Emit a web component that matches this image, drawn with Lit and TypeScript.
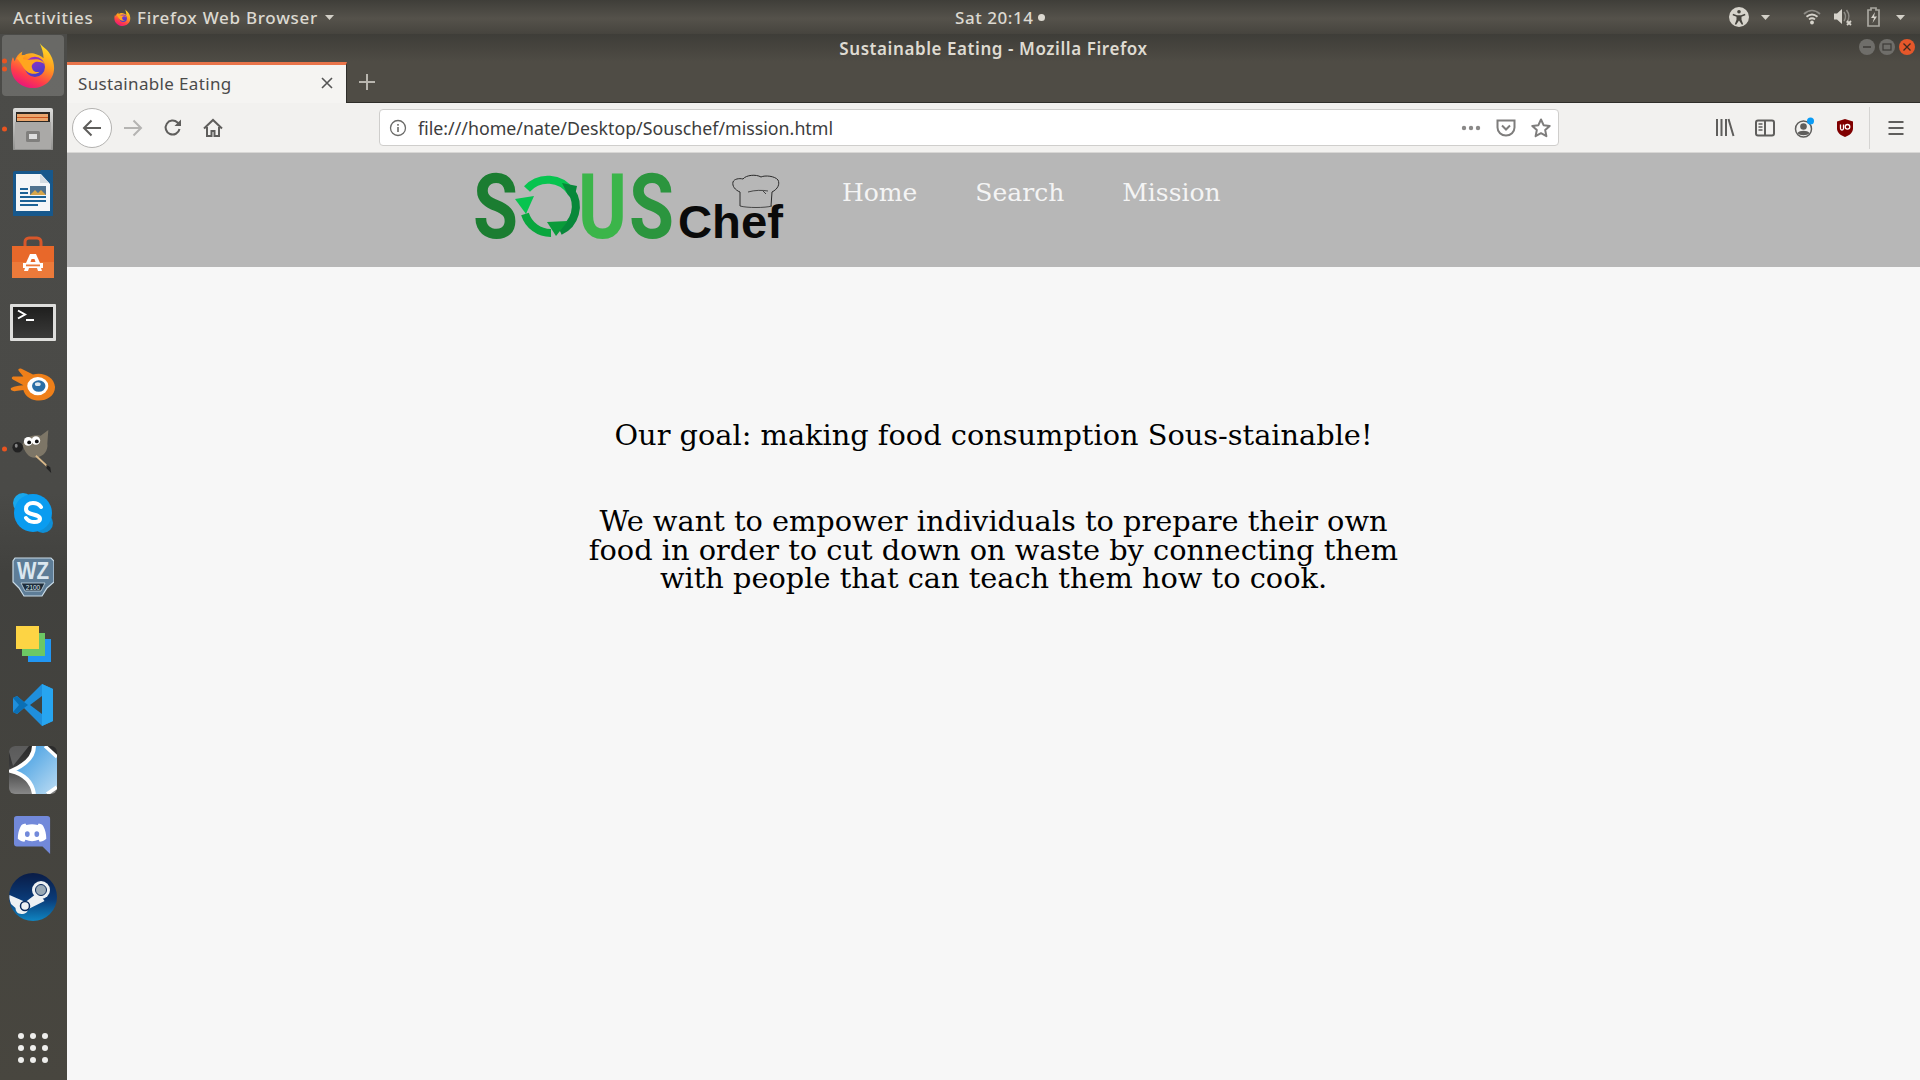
import { LitElement, html, css, svg } from "lit";
import { customElement } from "lit/decorators.js";

const ico = (w: number, body: unknown, vb = 24) =>
  html`<svg width=${w} height=${w} viewBox="0 0 ${vb} ${vb}">${body}</svg>`;

const firefox = (w: number, id = "a") => ico(w, svg`
  <defs>
    <linearGradient id="ffa${id}" x1="0.75" y1="0" x2="0.3" y2="1"><stop offset="0" stop-color="#ffe226"/><stop offset=".42" stop-color="#ff9a1f"/><stop offset=".75" stop-color="#ff3d4a"/><stop offset="1" stop-color="#e8127f"/></linearGradient>
    <linearGradient id="ffb${id}" x1="0.3" y1="0" x2="0.7" y2="1"><stop offset="0" stop-color="#a02fc4"/><stop offset="1" stop-color="#3f3fc8"/></linearGradient>
  </defs>
  <path fill="url(#ffa${id})" d="M31 1c2 4 8 6 11 12 3 5 4 10 4 14 0 12-10 21-22 21S1 39 1 26c0-4 1-8 2-10 1 1 1 3 2 4 1-4 4-8 8-10-1 2-1 4 0 5 3-3 8-4 12-3 4 1 8 3 10 5 0-6-2-11-4-16z"/>
  <circle cx="26" cy="26" r="10.500" fill="url(#ffb${id})"/>
  <path fill="#ffa51e" d="M7 17c3-3 6-4 9-3-2 1-3 3-2 4 4 1 9 0 13 0 4 0 8 2 9 5-3-2-7-3-10-2-2 1-4 3-3 6 1 4 5 5 8 4-3 3-9 3-13 0-4-3-6-9-11-14z"/>
`, 48);

const files = (w: number) => ico(w, svg`
  <defs><linearGradient id="fg" x1="0" y1="0" x2="0" y2="1"><stop offset="0" stop-color="#dcdcda"/><stop offset="1" stop-color="#8f8f8d"/></linearGradient></defs>
  <rect x="1" y="0" width="40" height="43" rx="2" fill="url(#fg)"/>
  <rect x="4" y="4" width="34" height="10" fill="#2b2723"/>
  <rect x="5" y="6" width="31" height="7" fill="#e9a56c"/><rect x="5" y="9" width="31" height="1" fill="#c9541e"/>
  <path d="M3 14h36v27H3z" fill="#aaa9a7"/>
  <rect x="14" y="23" width="14" height="11" rx="1.500" fill="#807f7d"/><rect x="17" y="26" width="8" height="5" fill="#dedede"/>
`, 42);

const writer = (w: number) => ico(w, svg`<g transform="translate(2 0)">
  <path d="M1 3a2 2 0 0 1 2-2h27l11 12v32a2 2 0 0 1-2 2H3a2 2 0 0 1-2-2z" fill="#17588c"/>
  <path d="M4 4h25l9 10v27H4z" fill="#f3f6f8"/><path d="M28 0h13v13z" fill="#17588c"/><path d="M28 4l9 9h-9z" fill="#d5dde3"/>
  <g fill="#1b6296"><rect x="8" y="18" width="8" height="2"/><rect x="8" y="22" width="8" height="2"/><rect x="8" y="26" width="26" height="2"/><rect x="8" y="30" width="26" height="2"/><rect x="8" y="34" width="18" height="2"/></g>
  <rect x="18" y="16" width="16" height="9" fill="#50738f"/><path d="M18 25l5-5 3 3 3-3 5 5z" fill="#d6a64a"/></g>
`, 46);

const software = (w: number) => ico(w, svg`
  <path d="M13 11V6a4 4 0 0 1 4-4h8a4 4 0 0 1 4 4v5" fill="none" stroke="#d8572a" stroke-width="3"/>
  <path d="M0 10h42v32H0z" fill="#ec7a3a"/><path d="M0 10h42v16H0z" fill="#e8682a"/>
  <path d="M18 18h6l4 9H14z" fill="#fff"/><path d="M19.500 23h3l1 3h-5z" fill="#e8682a"/>
  <rect x="11" y="27" width="20" height="5" fill="#fff"/><rect x="14" y="28.500" width="14" height="1.800" fill="#ec7a3a"/>
  <path d="M13 32h4l-1 3h-4zM25 32h4l1 3h-4z" fill="#fff"/>
`, 42);

const terminal = (w: number) => ico(w, svg`
  <defs><linearGradient id="tg" x1="0" y1="0" x2="0" y2="1"><stop offset="0" stop-color="#1f1f1e"/><stop offset="1" stop-color="#3a3a39"/></linearGradient></defs>
  <g transform="translate(0 6)">
  <rect x="0" y="0" width="46" height="37" rx="1" fill="#dededc"/><rect x="3" y="3" width="40" height="31" fill="url(#tg)"/>
  <path d="M8 6.500l7 4-7 4" fill="none" stroke="#fff" stroke-width="2"/><rect x="16" y="15" width="8" height="2" fill="#fff"/></g>
`, 46);

const blender = (w: number) => ico(w, svg`
  <path d="M1 24c4-2 9-3 13-3L3 15c-2-1-1-3 1-3h10L9 6c-1-2 1-3 3-2l12 6c10-3 22 2 23 13 0 10-10 15-19 14-8-1-13-6-14-11L6 27c-3 1-6-1-5-3z" fill="#ee7f19"/>
  <ellipse cx="29" cy="22" rx="11" ry="9.500" fill="#fff"/><ellipse cx="30" cy="22" rx="7" ry="6" fill="#2a6ea6"/><ellipse cx="29" cy="20" rx="3" ry="2" fill="#dfe8ef"/>
`, 48);

const gimp = (w: number) => ico(w, svg`
  <path d="M13 17c3-7 10-11 19-9l8-6-1 14c1 8-4 14-12 15-7 1-12-6-14-14z" fill="#7d7667"/>
  <ellipse cx="8" cy="20" rx="5.500" ry="5.500" fill="#222"/><ellipse cx="6.500" cy="18.500" rx="1.500" ry="2" fill="#888"/>
  <circle cx="19" cy="14" r="4.500" fill="#fff"/><circle cx="27" cy="13" r="4.500" fill="#fff"/><circle cx="20" cy="15" r="2" fill="#111"/><circle cx="28" cy="14" r="2" fill="#111"/>
  <path d="M27 29l12 11" stroke="#d9b98a" stroke-width="2"/><path d="M38 38l4 3 1 6-5-5z" fill="#222"/>
`, 48);

const skype = (w: number) => ico(w, svg`
  <circle cx="11" cy="11" r="10" fill="#1aa7ec"/><circle cx="31" cy="31" r="10" fill="#0f8ed6"/><circle cx="21" cy="21" r="19" fill="#0a9cf0"/>
  <path d="M29 15c-2-3-5-4-8-4-4 0-7 2-7 6 0 7 14 4 14 10 0 2-3 3-6 3s-6-1-8-4" fill="none" stroke="#fff" stroke-width="4" stroke-linecap="round"/>
`, 42);

const wz = (w: number) => html`<span class="wz">${ico(w, svg`
  <path d="M3 1h36l3 3v21l-7 6-5 8H12l-5-8-6-6V4z" fill="#5e7d97" stroke="#c8dae6" stroke-width="1.200"/>
  <text x="21" y="22" text-anchor="middle" font-family="Liberation Sans" font-weight="700" font-size="24" fill="#dbe7ef" textLength="32" lengthAdjust="spacingAndGlyphs">WZ</text>
  <path d="M9 26h24l-4 8H13z" fill="#1e2d3b" stroke="#c8dae6" stroke-width=".8"/>
  <text x="21" y="32.500" text-anchor="middle" font-family="Liberation Sans" font-size="6.500" fill="#dbe7ef">2100</text>
`, 42)}</span>`;

const slides = (w: number) => ico(w, svg`
  <rect x="14" y="14" width="23" height="23" fill="#2196f3"/><rect x="8" y="8" width="23" height="23" fill="#6cc864"/><rect x="2" y="1" width="23" height="23" fill="#fdd444"/>
`, 38);

const vscode = (w: number) => ico(w, svg`
  <path d="M30 0l11 5v32l-11 5L12 24l-7 6-4-2V14l4-2 7 6z" fill="#1f8fdc"/>
  <path d="M30 0l11 5v32l-11 5z" fill="#27a5f0"/><path d="M30 12L18 21l12 9z" fill="#3f4340"/>
  <path d="M5 12l7 6 4 3-4 3-7 6-4-2 6-7-6-7z" fill="#0b6fb5"/>
`, 42);

const krita = (w: number) => ico(w, svg`
  <defs><linearGradient id="kb" x1="0" y1="0" x2="1" y2="1"><stop offset="0" stop-color="#2f94df"/><stop offset="1" stop-color="#bcdcf3"/></linearGradient>
  <linearGradient id="kd" x1="0" y1="0" x2="0" y2="1"><stop offset="0" stop-color="#2a2a2a"/><stop offset=".4" stop-color="#3a3a3a"/><stop offset="1" stop-color="#888"/></linearGradient></defs>
  <rect x="0" y="0" width="48" height="48" rx="6" fill="url(#kd)"/>
  <path d="M0 6a6 6 0 0 1 6-6h14L4 20z" fill="#8c8c8c" opacity=".5"/>
  <path d="M25 0C25 12 14 20 2 25c12 3 21 10 23 23h12l11-8V11L36 0z" fill="url(#kb)"/>
  <path d="M25 0C25 12 14 20 2 25c12 3 21 10 23 23" fill="none" stroke="#fff" stroke-width="4"/>
  <path d="M36 0l12 11M38 48l10-7" stroke="#fff" stroke-width="3.500"/>
`, 48);

const discord = (w: number) => ico(w, svg`
  <path d="M3 0h32a3 3 0 0 1 3 3v37l-8-8H3a3 3 0 0 1-3-3V3a3 3 0 0 1 3-3z" fill="#7289da"/>
  <path d="M12 8c-3 1-4 1-5 3-2 4-3 8-3 13 2 2 5 3 7 3l1-2c5 2 9 2 14 0l1 2c2 0 5-1 7-3 0-5-1-9-3-13-1-2-2-2-5-3l-1 1.500c-4-1-8-1-12 0z" fill="#fff"/>
  <ellipse cx="14" cy="19" rx="2.500" ry="3" fill="#7289da"/><ellipse cx="24" cy="19" rx="2.500" ry="3" fill="#7289da"/>
`, 40);

const steam = (w: number) => ico(w, svg`
  <defs><linearGradient id="sg" x1="0" y1="0" x2="0" y2="1"><stop offset="0" stop-color="#0a1c46"/><stop offset=".55" stop-color="#0a3b78"/><stop offset="1" stop-color="#0f85c2"/></linearGradient></defs>
  <circle cx="24" cy="24" r="24" fill="url(#sg)"/>
  <path d="M0.500 22l16 7 13-10 6 9-16 8c-1 3-3 5-7 5-4 0-6-3-6-6L2 31c-1-3-2-6-1.500-9z" fill="#eef1f3"/>
  <circle cx="32" cy="17" r="9" fill="#eef1f3"/><circle cx="32" cy="17" r="5.500" fill="#9aa9b5" stroke="#0a2a5c" stroke-width="1"/>
  <circle cx="16" cy="33" r="4.500" fill="none" stroke="#0a2a5c" stroke-width="1.500"/>
`, 48);

const apps = html`<span class="apps">${Array.from({ length: 9 }, () => html`<i></i>`)}</span>`;

const dockItems: { i: unknown; dots?: number; active?: boolean; dy?: number }[] = [
  { i: firefox(46), dots: 2, active: true },
  { i: files(42), dots: 1 },
  { i: writer(46) },
  { i: software(42) },
  { i: terminal(46) },
  { i: blender(46), dy: 3 },
  { i: gimp(46), dots: 1, dy: 2 },
  { i: skype(42) },
  { i: wz(42), dy: 1 },
  { i: slides(38), dy: 3 },
  { i: vscode(42) },
  { i: krita(48), dy: 1 },
  { i: discord(38), dy: 2 },
  { i: steam(48) },
];

const grey = "#5f5e5c";
const backIco = ico(20, svg`<path d="M19 10H2M9.500 2.500L2 10l7.500 7.500" fill="none" stroke="${grey}" stroke-width="2"/>`, 20);
const fwdIco = ico(20, svg`<path d="M1 10h17M10.500 2.500L18 10l-7.500 7.500" fill="none" stroke="#b5b4b2" stroke-width="2"/>`, 20);
const reloadIco = ico(20, svg`<path d="M16.500 11a7 7 0 1 1-2-6.500L17 7" fill="none" stroke="${grey}" stroke-width="2"/><path d="M18 1.500V8h-6.500z" fill="${grey}"/>`, 20);
const homeIco = ico(20, svg`<path d="M1 10.500L10 2l9 8.500M4 9v9h4.500v-5h3v5H16V9" fill="none" stroke="${grey}" stroke-width="2"/>`, 20);
const infoIco = ico(18, svg`<circle cx="9" cy="9" r="7.500" fill="none" stroke="#6a6a68" stroke-width="1.300"/><rect x="8.200" y="8" width="1.600" height="5" fill="#6a6a68"/><rect x="8.200" y="5" width="1.600" height="1.700" fill="#6a6a68"/>`, 18);
const dotsIco = html`<svg width="20" height="6" viewBox="0 0 20 6"><g fill="#8a8988"><circle cx="3" cy="3" r="2.200"/><circle cx="10" cy="3" r="2.200"/><circle cx="17" cy="3" r="2.200"/></g></svg>`;
const pocketIco = ico(20, svg`<path d="M1.500 2.500h17v7a8.500 8 0 0 1-17 0z" fill="none" stroke="#7e7d7c" stroke-width="2"/><path d="M6 7.500l4 4 4-4" fill="none" stroke="#7e7d7c" stroke-width="2"/>`, 20);
const starIco = ico(20, svg`<path d="M10 1.500l2.600 5.700 6.100.7-4.500 4.200 1.200 6.100L10 15.200l-5.400 3 1.200-6.100L1.300 7.900l6.100-.7z" fill="none" stroke="#7e7d7c" stroke-width="2" stroke-linejoin="round"/>`, 20);
const libIco = ico(20, svg`<path d="M2 1v17M6.500 1v17M11 1v17M13.500 1l5 17" fill="none" stroke="${grey}" stroke-width="2"/>`, 20);
const sideIco = ico(20, svg`<rect x="1" y="2.500" width="18" height="15" rx="2" fill="none" stroke="${grey}" stroke-width="2"/><path d="M10 3v14" stroke="${grey}" stroke-width="2"/><path d="M3.500 6h4M3.500 9h4M3.500 12h4" stroke="${grey}" stroke-width="1.300"/>`, 20);
const acctIco = html`<svg width="24" height="24" viewBox="0 0 24 24"><circle cx="10.500" cy="13" r="8" fill="none" stroke="${grey}" stroke-width="1.500"/><circle cx="10.500" cy="10.500" r="3.300" fill="${grey}"/><path d="M4.500 17c2-3 10-3 12 0-2 3-10 3-12 0z" fill="${grey}"/><circle cx="17.500" cy="5" r="3.500" fill="#0a9bf5"/></svg>`;
const ublockIco = ico(20, svg`<path d="M10 1l8 2.500v7c0 4-3.500 7-8 8.500-4.500-1.500-8-4.500-8-8.500v-7z" fill="#800000"/><path d="M5.500 6.500v4c0 2 3 2 3 0v-4" fill="none" stroke="#fff" stroke-width="1.300"/><circle cx="12.500" cy="8.800" r="2.300" fill="none" stroke="#fff" stroke-width="1.300"/>`, 20);
const menuIco = ico(20, svg`<path d="M2.500 4h15M2.500 10h15M2.500 16h15" stroke="${grey}" stroke-width="2"/>`, 20);
const closeIco = ico(14, svg`<path d="M2 2l10 10M12 2L2 12" stroke="#555" stroke-width="1.600"/>`, 14);
const plusIco = ico(18, svg`<path d="M9 1v16M1 9h16" stroke="#b9b6af" stroke-width="2"/>`, 18);

const caret = html`<svg class="caret" width="9" height="5" viewBox="0 0 9 5"><path d="M0 0h9L4.500 5z" fill="#d3d0c8"/></svg>`;
const a11yIco = ico(20, svg`<circle cx="10" cy="10" r="10" fill="#d6d3cb"/><circle cx="10" cy="4.800" r="1.800" fill="#45433d"/><path d="M4 6.800l4 1.400h4l4-1.400.4 1.400-3.900 1.500v3l1.700 4.500-1.300.5L10 13.500 7.100 17.700l-1.300-.5 1.700-4.500v-3L3.600 8.200z" fill="#45433d"/>`, 20);
const wifiIco = ico(18, svg`<g fill="none" stroke-width="1.800"><path d="M1 6c5-4.500 11-4.500 16 0" stroke="#8d8b85"/><path d="M3.500 8.800c3.500-3 7.500-3 11 0" stroke="#d6d3cb"/><path d="M6 11.400c2-1.600 4-1.600 6 0" stroke="#d6d3cb"/></g><circle cx="9" cy="14.500" r="1.900" fill="#d6d3cb"/>`, 18);
const volIco = ico(20, svg`<path d="M1 6.500h3L9 2v15L4 12.500H1z" fill="#d6d3cb"/><path d="M11 5c2 3 2 6 0 9M13.500 3c3 4 3 9 0 13" fill="none" stroke="#8d8b85" stroke-width="1.500"/><path d="M14 14l4 4M18 14l-4 4" stroke="#d6d3cb" stroke-width="1.800"/>`, 20);
const battIco = ico(20, svg`<path d="M7 1h5v2h3v16H4V3h3z" fill="none" stroke="#a8a69f" stroke-width="1.700"/><path d="M11 5l-4 6h3l-1.500 5L13 9.500h-3z" fill="#d6d3cb"/>`, 20);
const smallFf = firefox(17, "b");

const hat = svg`
  <g fill="none" stroke="#2a2a2a" stroke-width="1">
    <path d="M740 206v-14c-5-2-8-6-7-10 1-3 6-4 10-3 3-4 13-5 18-2 4-2 14-1 17 3 2 4 0 9-6 12l-1 14"/>
    <path d="M740 206c7 2 25 2 32 0M748 192c7-2 14-2 20-1M763 191l3 3" stroke-width=".8"/>
  </g>`;

const logo = html`<svg class="logo" width="320" height="76" viewBox="0 0 320 76" role="img" aria-label="Sous Chef">
  <text class="lg" x="3" y="70" fill="#1b7d31" textLength="45" lengthAdjust="spacingAndGlyphs">S</text>
  <g transform="translate(-470 -168)">
    <g fill="none" stroke-width="8">
      <path d="M571 192a28 28 0 0 0-44-3" stroke="#07c44f"/>
      <path d="M525 214a27 27 0 0 0 26 19" stroke="#0aa63e"/>
      <path d="M560 231a27 27 0 0 0 11-40" stroke="#07883a"/>
    </g>
    <path d="M515 199l19-3-8 18z" fill="#07c44f"/>
    <path d="M547 222l21-1-12 15z" fill="#0a9b3a"/>
    <path d="M562 183l15 3-3 14-6-5z" fill="#07883a"/>
    ${hat}
  </g>
  <text class="lg" x="108" y="70" fill="#3bb54a" textLength="49" lengthAdjust="spacingAndGlyphs">U</text>
  <text class="lg" x="159" y="70" fill="#2b953e" textLength="45" lengthAdjust="spacingAndGlyphs">S</text>
  <text class="cf" x="208" y="70" fill="#0a0a0a" textLength="105" lengthAdjust="spacingAndGlyphs">Chef</text>
</svg>`;

@customElement("app-root")
export class AppRoot extends LitElement {
  static styles = css`
    :host { display: block; width: 1920px; height: 1080px; overflow: hidden; background: #f7f7f7; }
    .root { display: grid; grid-template-rows: 34px 1fr; height: 1080px; font-family: "Noto Sans", sans-serif; }
    svg { display: block; flex: none; }

    .top { display: flex; align-items: center; padding: 0 0 0 13px; color: #dcd9d1; font-size: 17px; font-weight: 500; letter-spacing: .72px;
      background: linear-gradient(#3f3e39 0, #55524b 55%, #46443e 100%); white-space: nowrap; }
    .activities { width: 101px; flex: none; }
    .appmenu { display: flex; align-items: center; gap: 6px; width: 841px; flex: none; }
    .appmenu .caret { margin-left: 1px; }
    .clock { display: flex; align-items: center; gap: 5px; letter-spacing: .55px; }
    .clock i { width: 7px; height: 7px; border-radius: 50%; background: #dcd9d1; }
    .tray { margin-left: auto; display: flex; align-items: center; padding-right: 15px; }
    .tray .a { margin-right: 12px; }
    .tray .c1 { margin-right: 33px; }
    .tray .t { margin-right: 12px; }
    .tray .t2 { margin-right: 11px; }
    .tray .t3 { margin-right: 12px; }

    .main { display: grid; grid-template-columns: 67px 1fr; min-height: 0; }
    .dock { display: flex; flex-direction: column; padding-right: 1px; box-sizing: border-box; background: linear-gradient(#4b4b48 0, #4a4a47 460px, #41413e 540px, #48463f 1046px); }
    .slot { position: relative; height: 64px; display: flex; align-items: center; justify-content: center; flex: none; }
    .slot.active { height: 62px; margin-bottom: 1px; }
    .slot.active::before { content: ""; position: absolute; left: 2px; top: 1px; right: 2px; bottom: 0; border-radius: 4px; background: rgba(255, 255, 255, 0.17); }
    .ic { position: relative; display: block; }
    .dots { position: absolute; left: 2px; top: 50%; transform: translateY(-50%); display: flex; flex-direction: column; gap: 3px; }
    .dots i { width: 5px; height: 5px; border-radius: 50%; background: #e95420; }
    .spacer { flex: 1; }
    .appsw { height: 47px; display: flex; justify-content: center; flex: none; }
    .apps { display: grid; grid-template-columns: repeat(3, 6px); gap: 6px; align-content: start; }
    .apps i { width: 6px; height: 6px; border-radius: 50%; background: #eeeeec; }

    .win { display: grid; grid-template-rows: 28px 41px 50px 114px 1fr; min-width: 0; background: #f7f7f7; }
    .title { display: flex; align-items: center; justify-content: center; position: relative; color: #dfdbd2; font-size: 17px; font-weight: 600; letter-spacing: .57px;
      background: linear-gradient(#3e3d38, #4f4c45); }
    .wbtns { position: absolute; right: 5px; top: 5px; display: flex; gap: 4px; }
    .wbtns b { width: 16px; height: 16px; border-radius: 50%; background: #6f6e6a; display: flex; align-items: center; justify-content: center; }
    .wbtns b.x { background: #e5572a; }
    .wbtns svg { width: 10px; height: 10px; }

    .tabs { display: flex; background: #4f4c45; border-bottom: 1px solid #2f2e2a; box-sizing: border-box; }
    .tab { width: 280px; height: 41px; box-sizing: border-box; background: #f5f4f2; border-top: 3px solid #e9744a; border-right: 1px solid #2f2e2a;
      display: flex; align-items: center; padding: 0 12px 2px 11px; color: #4a4a4a; font-size: 17px; font-weight: 400; letter-spacing: .34px; }
    .tab span { flex: 1; }
    .plus { width: 40px; display: flex; align-items: center; justify-content: center; }

    .bar { display: flex; align-items: center; background: #f2f1ef; border-bottom: 1px solid #d8d7d5; box-sizing: border-box; padding-left: 5px; }
    .nav { width: 42px; height: 40px; display: flex; align-items: center; justify-content: center; flex: none; }
    .back { width: 40px; height: 40px; border-radius: 50%; background: #fff; border: 1px solid #b3b2b0; box-sizing: border-box; margin-right: 1px; }
    .f { width: 40px; }
    .h { width: 40px; }
    .url { margin-left: 146px; width: 1180px; height: 37px; flex: none; box-sizing: border-box; background: #fff; border: 1px solid #cfcecc; border-radius: 4px;
      display: flex; align-items: center; padding: 0 4px 0 9px; color: #3d3d3d; font-size: 17.800px; font-weight: 400; }
    .url .addr { margin-left: 11px; flex: 1; }
    .url .ra { display: flex; align-items: center; gap: 15px; margin-right: 3px; }
    .tools { display: flex; align-items: center; margin-left: 146px; }
    .tools > div { width: 40px; display: flex; justify-content: center; }
    .sep { width: 1px; height: 42px; background: #d5d4d2; margin: 0 16px 0 4px; }

    .page-head { background: #b7b7b7; display: flex; align-items: flex-start; padding: 18px 0 0 403px; }
    .logo { margin-top: -3px; overflow: visible; }
    .links { display: flex; gap: 58px; margin-left: 52px; margin-top: 8px; font-family: "DejaVu Serif", serif; font-size: 25px; color: #f4f4f4; line-height: 28px; }
    .lg { font-family: Roboto, sans-serif; font-weight: 700; font-size: 91px; }
    .cf { font-family: "Liberation Sans", sans-serif; font-weight: 700; font-size: 47px; }

    .content { display: flex; flex-direction: column; align-items: center; font-family: "DejaVu Serif", serif; color: #000; text-align: center; padding-top: 151px; }
    .goal { margin: 0; font-size: 28.800px; line-height: 34px; }
    .mission { margin: 55px 0 0; font-size: 28.800px; line-height: 28.500px; width: 840px; }
  `;

  render() {
    return html`<div class="root">
      <header class="top">
        <span class="activities">Activities</span>
        <span class="appmenu">${smallFf}<span>Firefox Web Browser</span>${caret}</span>
        <span class="clock">Sat 20:14<i></i></span>
        <span class="tray">
          <span class="a">${a11yIco}</span><span class="c1">${caret}</span>
          <span class="t">${wifiIco}</span><span class="t2">${volIco}</span><span class="t3">${battIco}</span>${caret}
        </span>
      </header>
      <div class="main">
        <aside class="dock">
          ${dockItems.map((d) => html`<div class="slot ${d.active ? "active" : ""}">
            <span class="ic" style="top:${d.dy ?? 0}px">${d.i}</span>
            ${d.dots ? html`<span class="dots">${Array.from({ length: d.dots }, () => html`<i></i>`)}</span>` : ""}
          </div>`)}
          <div class="spacer"></div>
          <div class="appsw">${apps}</div>
        </aside>
        <div class="win">
          <div class="title">Sustainable Eating - Mozilla Firefox
            <span class="wbtns">
              <b><svg viewBox="0 0 10 10"><path d="M1 5h8" stroke="#3c3b37" stroke-width="1.500"/></svg></b>
              <b><svg viewBox="0 0 10 10"><rect x="1" y="2" width="8" height="6" fill="none" stroke="#3c3b37" stroke-width="1.200"/></svg></b>
              <b class="x"><svg viewBox="0 0 10 10"><path d="M1.500 1.500l7 7M8.500 1.500l-7 7" stroke="#3c2a20" stroke-width="1.300"/></svg></b>
            </span>
          </div>
          <div class="tabs">
            <div class="tab"><span>Sustainable Eating</span>${closeIco}</div>
            <div class="plus">${plusIco}</div>
          </div>
          <div class="bar">
            <div class="nav back">${backIco}</div>
            <div class="nav f">${fwdIco}</div>
            <div class="nav f">${reloadIco}</div>
            <div class="nav h">${homeIco}</div>
            <div class="url">${infoIco}<span class="addr">file:///home/nate/Desktop/Souschef/mission.html</span>
              <span class="ra">${dotsIco}${pocketIco}${starIco}</span></div>
            <div class="tools"><div>${libIco}</div><div>${sideIco}</div><div>${acctIco}</div><div>${ublockIco}</div></div>
            <div class="sep"></div>
            ${menuIco}
          </div>
          <nav class="page-head">${logo}
            <div class="links"><span>Home</span><span>Search</span><span>Mission</span></div>
          </nav>
          <main class="content">
            <p class="goal">Our goal: making food consumption Sous-stainable!</p>
            <p class="mission">We want to empower individuals to prepare their own food in order to cut down on waste by connecting them with people that can teach them how to cook.</p>
          </main>
        </div>
      </div>
    </div>`;
  }
}
